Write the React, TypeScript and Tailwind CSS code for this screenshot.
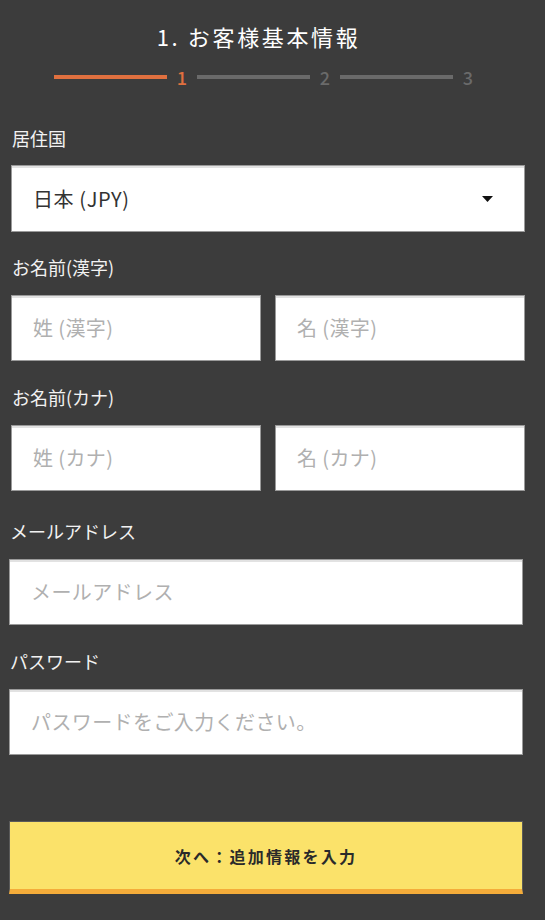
import React from 'react';

const font = { fontFamily: '"Noto Sans CJK JP", "Noto Sans", sans-serif' };

function Field({ placeholder, className = '' }: { placeholder: string; className?: string }) {
  return (
    <div
      className={`h-[66px] bg-white border border-[#9a9a9a] shadow-[inset_0_2px_0_#e2e2e2] flex items-center pl-[21px] ${className}`}
    >
      <span className="text-[20px] leading-[28px] text-[#b0b0b0] tracking-[0.02em]">{placeholder}</span>
    </div>
  );
}

function Label({ children }: { children: React.ReactNode }) {
  return <div className="h-[24px] text-[18px] leading-[24px] text-[#f2f2f2]">{children}</div>;
}

export default function App() {
  const steps = [1, 2, 3];

  return (
    <div className="min-h-screen bg-[#3c3c3c] pt-[22px] pb-8" style={font}>
      {/* Header */}
      <h1 className="h-[28px] text-center text-[22px] leading-[28px] tracking-[0.12em] text-white font-normal pr-[28px]">
        1. お客様基本情報
      </h1>

      {/* Steps */}
      <div className="mt-[17px] pl-[54px] flex items-center h-[20px]">
        {steps.map((s) => (
          <div key={s} className="flex items-center">
            <div className={`w-[113px] h-[4px] ${s === 1 ? 'bg-[#e0703f]' : 'bg-[#6a6a6a]'}`} />
            <div
              className={`w-[30px] text-center text-[18px] leading-[20px] font-medium ${
                s === 1 ? 'text-[#e0703f]' : 'text-[#6a6a6a]'
              }`}
            >
              {s}
            </div>
          </div>
        ))}
      </div>

      {/* Upper form */}
      <div className="pl-[11px] pr-[20px]">
        <div className="mt-[39px] pl-[1px]">
          <Label>居住国</Label>
        </div>
        <div className="mt-[15px] h-[67px] bg-white border border-[#9a9a9a] shadow-[inset_0_2px_0_#e2e2e2] flex items-center justify-between pl-[21px] pr-[31px]">
          <span className="text-[20px] leading-[28px] text-[#333] tracking-[0.03em]">日本 (JPY)</span>
          <svg width="11" height="6" viewBox="0 0 11 6">
            <path d="M0 0h11L5.5 6z" fill="#111" />
          </svg>
        </div>

        <div className="mt-[23px] pl-[1px]">
          <Label>お名前(漢字)</Label>
        </div>
        <div className="mt-[16px] grid grid-cols-2 gap-[14px]">
          <Field placeholder="姓 (漢字)" />
          <Field placeholder="名 (漢字)" />
        </div>

        <div className="mt-[24px] pl-[1px]">
          <Label>お名前(カナ)</Label>
        </div>
        <div className="mt-[16px] grid grid-cols-2 gap-[14px]">
          <Field placeholder="姓 (カナ)" />
          <Field placeholder="名 (カナ)" />
        </div>
      </div>

      {/* Lower form */}
      <div className="pl-[9px] pr-[22px]">
        <div className="mt-[28px] pl-[1px]">
          <Label>メールアドレス</Label>
        </div>
        <Field placeholder="メールアドレス" className="mt-[16px]" />

        <div className="mt-[24px] pl-[1px]">
          <Label>パスワード</Label>
        </div>
        <Field placeholder="パスワードをご入力ください。" className="mt-[16px]" />

        <button className="mt-[66px] w-full h-[73px] bg-[#fbe26a] border border-[#5a5a5a] border-b-[5px] border-b-[#f4ac3a] flex items-center justify-center">
          <span className="text-[16px] leading-[24px] font-bold tracking-[0.14em] text-[#2a2a2a]">
            次へ：追加情報を入力
          </span>
        </button>
      </div>
    </div>
  );
}
